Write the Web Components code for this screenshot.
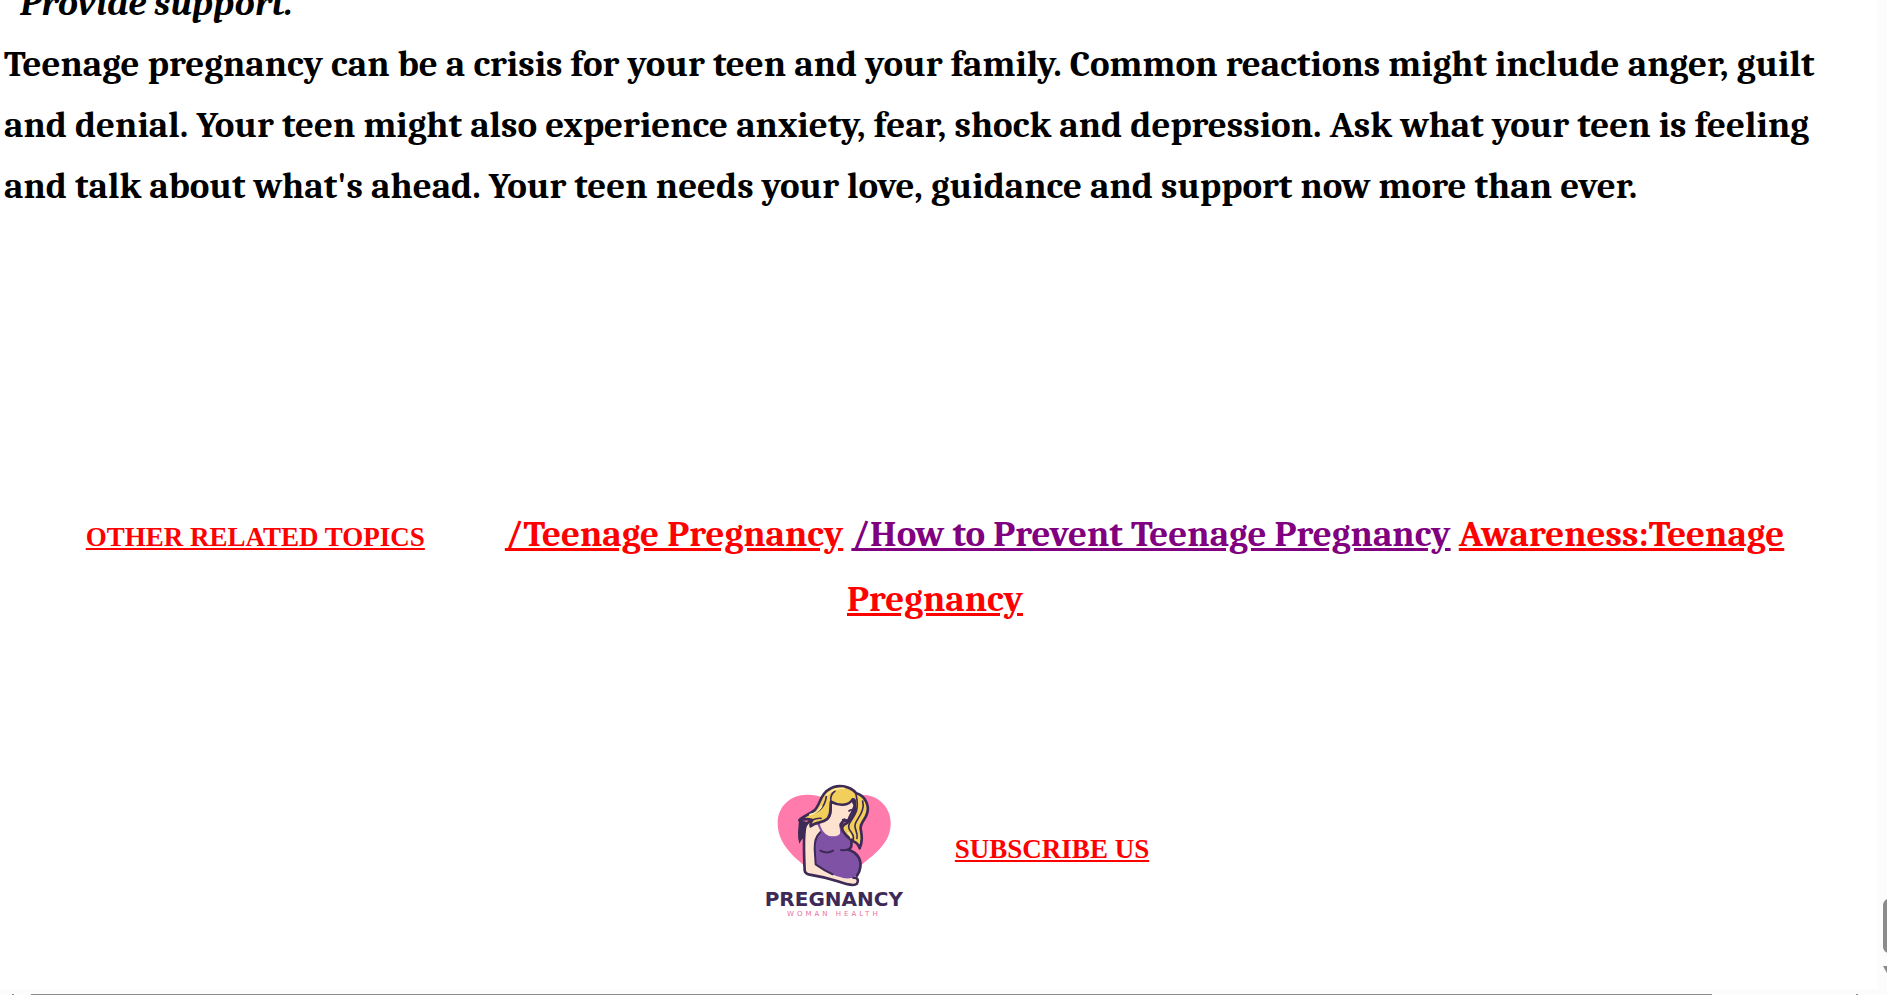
<!DOCTYPE html>
<html lang="en">
<head>
<meta charset="utf-8">
<title>Teenage Pregnancy</title>
<style>
body { margin: 0; background: #fff; }
</style>
</head>
<body>
<page-frame>
  <topic-article>
    <span slot="heading">Provide support.</span>
    Teenage pregnancy can be a crisis for your teen and your family. Common reactions might include anger, guilt<br>and denial. Your teen might also experience anxiety, fear, shock and depression. Ask what your teen is feeling<br>and talk about what's ahead. Your teen needs your love, guidance and support now more than ever.
  </topic-article>
  <related-topics></related-topics>
  <subscribe-bar></subscribe-bar>
</page-frame>
<script>
class BaseElement extends HTMLElement {
  constructor() {
    super();
    this.attachShadow({ mode: 'open' }).innerHTML = this.constructor.markup;
  }
}

class PageFrame extends BaseElement {
  static markup = `
    <style>
      :host { display: grid; grid-template: 1fr 6px / 1fr 9px; height: 100vh; overflow: hidden; }
      main { overflow: hidden; min-width: 0; padding-right: 8px; }
      .v, .h, .corner { background: #fcfcfc; overflow: hidden; }
      .v { display: flex; flex-direction: column; justify-content: flex-end; align-items: flex-start; padding: 0 0 14px 5px; }
      .v svg { flex: none; }
      .thumb { width: 12px; height: 54px; border-radius: 6px; background: #8b8b8b; margin-bottom: 13px; flex: none; }
      .h { display: flex; align-items: flex-end; justify-content: space-between; padding: 0 20px 0 12px; }
      .h i { height: 1px; background: #8b8b8b; width: 2px; }
      .h .bar { flex: 1; margin: 0 144px 0 17px; }
    </style>
    <main><slot></slot></main>
    <div class="v"><div class="thumb"></div><svg width="12" height="9" viewBox="0 0 12 9"><path d="M0 0H12L7 9H5Z" fill="#8b8b8b"/></svg></div>
    <div class="h"><i></i><i class="bar"></i><i></i></div>
    <div class="corner"></div>`;
}

class TopicArticle extends BaseElement {
  static markup = `
    <style>
      :host { display: block; padding-left: 4px; font: bold 37px/61px Cambria, Caladea, "Noto Serif", "Liberation Serif", serif; color: #000; white-space: nowrap; }
      h2 { margin: -27px 0 0; padding-left: 16px; font: inherit; font-style: italic; }
      p { margin: 0; }
    </style>
    <h2><slot name="heading"></slot></h2>
    <p><slot></slot></p>`;
}

class RelatedTopics extends BaseElement {
  static markup = `
    <style>
      :host { display: block; margin-top: 285px; text-align: center; font: bold 37px/65px Cambria, Caladea, "Noto Serif", "Liberation Serif", serif; }
      a { color: #f00; }
      a.visited { color: purple; }
      a.label { font: bold 27px/30px "Liberation Serif", serif; margin-right: 80px; }
    </style>
    <nav><a class="label" href="#topics">OTHER RELATED TOPICS</a><a href="#teenage">/Teenage Pregnancy</a> <a class="visited" href="#prevent">/How to Prevent Teenage Pregnancy</a> <a href="#awareness">Awareness:Teenage<br>Pregnancy</a></nav>`;
}

class BrandLogo extends BaseElement {
  static markup = `
    <style>
      :host { display: flex; flex-direction: column; align-items: center; width: 226px; color: #3d2a56; }
      svg { display: block; width: 180px; height: 120px; }
      b { font: bold 20px/20px "DejaVu Sans", sans-serif; }
      small { font: 7px/10px "DejaVu Sans", sans-serif; letter-spacing: 3px; color: #e96f9d; }
    </style>
    <svg viewBox="9 0 540 360" role="img" aria-label="Pregnant woman in front of a heart">
      <path fill="#ff7bac" d="M279 118C265 88 230 76 198 77C148 77 110 112 110 162C110 220 150 256 190 290L279 320L358 290C410 250 449 218 449 162C449 112 410 77 362 77C330 77 295 88 279 118Z"/>
      <g stroke="#3d2a56" stroke-width="8" stroke-linejoin="round" stroke-linecap="round">
        <path fill="#3d2a56" stroke="none" d="M174 152L171 190Q170 208 175 224Q180 212 188 206L200 160Z"/>
        <path fill="#fde2d0" d="M268 96Q274 150 248 154C224 146 205 152 195 168C186 186 188 240 191 304Q192 314 206 317Q250 324 290 337C315 346 340 352 348 344C354 334 350 325 338 326L300 300L330 215Q310 200 299 166L310 152Q322 160 326 144L332 132L342 110L330 84Z"/>
        <path fill="#8052a6" stroke="none" d="M220 148L234 156Q242 193 264 201Q288 205 297 194Q298 184 294 166L304 174Q310 198 330 212C334 224 334 234 322 242C346 250 360 268 358 292C356 318 340 331 310 328Q260 317 224 286Q218 250 221 212L238 185Z"/>
        <path fill="none" d="M300 170Q310 196 330 212Q336 236 322 242C348 250 361 270 358 294Q356 310 348 320"/>
        <path fill="none" stroke-width="6" d="M238 190Q220 206 221 240L224 286M238 245Q258 256 276 245M300 243Q312 246 324 240M225 287Q250 305 275 316"/>
        <path fill="#f2cf5b" d="M175 154C182 144 203 137 219 125C238 109 237 76 263 62C288 43 328 51 346 73C373 80 386 111 378 134C374 151 356 162 359 180C362 198 366 213 356 238C351 224 345 218 334 216C334 208 320 208 310 192C298 176 304 168 318 162C333 153 343 132 342 112C342 98 342 89 335 91C322 112 292 111 270 98C266 118 273 139 257 151C244 163 226 157 209 172Q207 160 214 153Q196 147 175 154Z"/>
        <path fill="none" stroke-width="5" d="M270 98C267 83 271 74 282 66M345 76Q352 106 346 127C338 151 316 164 325 181C333 194 341 200 336 216M365 96C374 127 345 151 342 168C339 181 352 189 348 208M213 132Q250 126 256 82M214 153Q228 147 240 148M305 152Q314 160 322 152M324 126Q332 119 340 125"/>
        <path fill="none" stroke="#fff0a0" stroke-width="5" d="M257 78Q279 55 309 58M207 137Q231 130 242 112M322 192Q330 203 330 206"/>
      </g>
    </svg>
    <b>PREGNANCY</b>
    <small>WOMAN HEALTH</small>`;
}

class SubscribeBar extends BaseElement {
  static markup = `
    <style>
      :host { display: flex; justify-content: center; align-items: center; gap: 8px; margin-top: 137px; }
      a { padding-top: 10px; color: #f00; font: bold 27px/30px "Liberation Serif", serif; }
    </style>
    <brand-logo></brand-logo><a href="#subscribe">SUBSCRIBE US</a>`;
}

customElements.define('page-frame', PageFrame);
customElements.define('topic-article', TopicArticle);
customElements.define('related-topics', RelatedTopics);
customElements.define('brand-logo', BrandLogo);
customElements.define('subscribe-bar', SubscribeBar);
</script>
</body>
</html>
